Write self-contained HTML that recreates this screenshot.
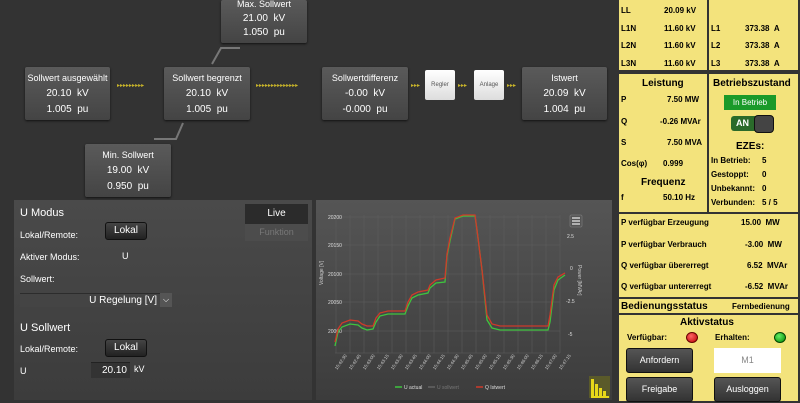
<!DOCTYPE html>
<html><head><meta charset="utf-8"><style>
*{margin:0;padding:0;box-sizing:border-box}
body{width:800px;height:400px;background:#333;font-family:"Liberation Sans",sans-serif;position:relative;overflow:hidden;color:#fff}
.box{position:absolute;background:linear-gradient(#5a5a5a,#444);border-radius:2px;box-shadow:0 1px 2px #111;text-align:center;font-size:10px;color:#fff;white-space:nowrap;line-height:12px}
.box .t{margin-top:5px;font-size:9px}
.box .v{margin-top:4px}
.arr{position:absolute;color:#c9b52a;font-size:6px}
.wb{position:absolute;background:linear-gradient(#fff,#ddd);border-radius:2px;color:#555;font-size:6px;text-align:center;line-height:30px;width:30px;height:30px;top:70px}
.ab{position:absolute;font-size:8px;color:#000;font-weight:bold;white-space:nowrap}
.y{position:absolute;background:#f3e37c;border:2px solid #333}
.btn{position:absolute;background:linear-gradient(#444,#222);border:1px solid #111;border-radius:3px;color:#fff;font-size:10px;text-align:center}
</style></head><body>
<!-- top diagram -->
<div class="box" style="left:221px;top:0;width:86px;height:43px"><div style="margin-top:-2px;font-size:9px">Max. Sollwert</div><div style="margin-top:3px">21.00&nbsp;&nbsp;kV</div><div style="margin-top:2px">1.050&nbsp;&nbsp;pu</div></div>
<svg style="position:absolute;left:0;top:0" width="620" height="200"><polyline points="240,48 221,48 212,64" fill="none" stroke="#777" stroke-width="2"/><polyline points="154,139 176,139 183,123" fill="none" stroke="#777" stroke-width="2"/></svg>
<div class="box" style="left:25px;top:67px;width:85px;height:53px"><div class="t">Sollwert ausgewählt</div><div class="v">20.10&nbsp;&nbsp;kV</div><div class="v">1.005&nbsp;&nbsp;pu</div></div>
<div class="arr" style="left:117px;top:82px">▸▸▸▸▸▸▸▸▸</div>
<div class="box" style="left:164px;top:67px;width:86px;height:53px"><div class="t">Sollwert begrenzt</div><div class="v">20.10&nbsp;&nbsp;kV</div><div class="v">1.005&nbsp;&nbsp;pu</div></div>
<div class="arr" style="left:256px;top:82px">▸▸▸▸▸▸▸▸▸▸▸▸▸▸</div>
<div class="box" style="left:322px;top:67px;width:86px;height:53px"><div class="t">Sollwertdifferenz</div><div class="v">-0.00&nbsp;&nbsp;kV</div><div class="v">-0.000&nbsp;&nbsp;pu</div></div>
<div class="arr" style="left:411px;top:82px">▸▸▸</div>
<div class="wb" style="left:425px">Regler</div>
<div class="arr" style="left:458px;top:82px">▸▸▸</div>
<div class="wb" style="left:474px">Anlage</div>
<div class="arr" style="left:507px;top:82px">▸▸▸</div>
<div class="box" style="left:522px;top:67px;width:85px;height:53px"><div class="t">Istwert</div><div class="v">20.09&nbsp;&nbsp;kV</div><div class="v">1.004&nbsp;&nbsp;pu</div></div>
<div class="box" style="left:85px;top:144px;width:86px;height:53px"><div class="t">Min. Sollwert</div><div class="v">19.00&nbsp;&nbsp;kV</div><div class="v">0.950&nbsp;&nbsp;pu</div></div>

<!-- U Modus panel -->
<div style="position:absolute;left:14px;top:200px;width:298px;height:200px;background:linear-gradient(#4a4a4a,#3c3c3c)"></div>
<div style="position:absolute;left:20px;top:207px;font-size:11px">U Modus</div>
<div style="position:absolute;left:20px;top:230px;font-size:9px">Lokal/Remote:</div>
<div class="btn" style="left:105px;top:222px;width:42px;height:18px;line-height:16px">Lokal</div>
<div style="position:absolute;left:20px;top:252px;font-size:9px">Aktiver Modus:</div>
<div style="position:absolute;left:122px;top:251px;font-size:9px">U</div>
<div style="position:absolute;left:20px;top:274px;font-size:9px">Sollwert:</div>
<div style="position:absolute;left:20px;top:293px;width:140px;height:14px;background:#444;border-top:1px solid #2c2c2c;font-size:10px;text-align:right;padding-right:3px;line-height:14px">U Regelung [V]</div>
<div style="position:absolute;left:160px;top:293px;width:12px;height:14px;background:#555;font-size:8px;text-align:center;line-height:14px">⌵</div>
<div style="position:absolute;left:20px;top:322px;font-size:11px">U Sollwert</div>
<div style="position:absolute;left:20px;top:344px;font-size:9px">Lokal/Remote:</div>
<div class="btn" style="left:105px;top:339px;width:42px;height:18px;line-height:16px">Lokal</div>
<div style="position:absolute;left:20px;top:366px;font-size:9px">U</div>
<div style="position:absolute;left:91px;top:362px;width:39px;height:16px;background:#333;border-top:1px solid #222;font-size:10px;text-align:right;padding-right:3px;line-height:16px">20.10</div>
<div style="position:absolute;left:134px;top:364px;font-size:9px">kV</div>
<div style="position:absolute;left:245px;top:204px;width:63px;height:20px;background:#2b2b2b;font-size:10px;text-align:center;line-height:20px">Live</div>
<div style="position:absolute;left:245px;top:224px;width:63px;height:17px;background:#4c4c4c;font-size:9px;color:#777;text-align:center;line-height:17px">Funktion</div>

<!-- chart -->
<div style="position:absolute;left:316px;top:200px;width:296px;height:200px;background:linear-gradient(#555,#3c3c3c)"></div>
<svg style="position:absolute;left:0;top:0" width="620" height="400" font-family="Liberation Sans">
<g stroke="#5e5e5e" stroke-width="0.5">
<line x1="335" y1="217" x2="560" y2="217"/><line x1="335" y1="245" x2="560" y2="245"/><line x1="335" y1="274" x2="560" y2="274"/><line x1="335" y1="302" x2="560" y2="302"/><line x1="335" y1="331" x2="560" y2="331"/><line x1="335" y1="353" x2="560" y2="353"/>
<line x1="336" y1="215" x2="336" y2="353"/><line x1="350" y1="215" x2="350" y2="353"/><line x1="364" y1="215" x2="364" y2="353"/><line x1="378" y1="215" x2="378" y2="353"/><line x1="392" y1="215" x2="392" y2="353"/><line x1="406" y1="215" x2="406" y2="353"/><line x1="420" y1="215" x2="420" y2="353"/><line x1="434" y1="215" x2="434" y2="353"/><line x1="448" y1="215" x2="448" y2="353"/><line x1="462" y1="215" x2="462" y2="353"/><line x1="476" y1="215" x2="476" y2="353"/><line x1="490" y1="215" x2="490" y2="353"/><line x1="504" y1="215" x2="504" y2="353"/><line x1="518" y1="215" x2="518" y2="353"/><line x1="532" y1="215" x2="532" y2="353"/><line x1="546" y1="215" x2="546" y2="353"/><line x1="560" y1="215" x2="560" y2="353"/>
</g>
<g font-size="5" fill="#ddd"><text x="328" y="219">20200</text><text x="328" y="247">20150</text><text x="328" y="276">20100</text><text x="328" y="304">20050</text><text x="328" y="333">20000</text>
<text x="567" y="238">2.5</text><text x="570" y="270">0</text><text x="566" y="303">-2.5</text><text x="568" y="336">-5</text></g>
<text transform="translate(323,285) rotate(-90)" font-size="5" fill="#ccc">Voltage [V]</text>
<text transform="translate(578,265) rotate(90)" font-size="5" fill="#ccc">Power [MVAr]</text>
<g font-size="4.5" fill="#ccc">
<text transform="translate(337,370) rotate(-55)">15:42:30</text><text transform="translate(351,370) rotate(-55)">15:42:45</text><text transform="translate(365,370) rotate(-55)">15:43:00</text><text transform="translate(379,370) rotate(-55)">15:43:15</text><text transform="translate(393,370) rotate(-55)">15:43:30</text><text transform="translate(407,370) rotate(-55)">15:43:45</text><text transform="translate(421,370) rotate(-55)">15:44:00</text><text transform="translate(435,370) rotate(-55)">15:44:15</text><text transform="translate(449,370) rotate(-55)">15:44:30</text><text transform="translate(463,370) rotate(-55)">15:45:45</text><text transform="translate(477,370) rotate(-55)">15:45:00</text><text transform="translate(491,370) rotate(-55)">15:45:15</text><text transform="translate(505,370) rotate(-55)">15:45:30</text><text transform="translate(519,370) rotate(-55)">15:46:00</text><text transform="translate(533,370) rotate(-55)">15:46:15</text><text transform="translate(547,370) rotate(-55)">15:47:00</text><text transform="translate(561,370) rotate(-55)">15:47:15</text>
</g>
<polyline fill="none" stroke="#3ec43e" stroke-width="1.3" points="335,346 338,332 342,327 350,324 358,325 362,328 367,330 373,329 376,322 380,316 388,314 405,314 408,306 412,298 418,295 428,293 430,288 436,283 445,282 447,256 450,241 455,219 463,216 475,216 477,230 482,270 487,320 492,328 500,330 548,330 550,322 554,290 558,280 565,275"/>
<polyline fill="none" stroke="#cf3a2a" stroke-width="1.3" points="335,342 338,329 342,323 350,320 358,321 362,324 367,326 373,326 376,318 380,313 388,311 405,311 408,302 412,295 418,292 428,290 430,285 436,280 445,278 447,254 450,238 455,218 463,215 475,215 477,230 482,270 487,315 492,324 500,326 548,326 550,315 554,285 558,277 565,273"/>
<rect x="570" y="215" width="12" height="12" rx="1" fill="#555" stroke="#888" stroke-width="0.5"/>
<g stroke="#eee" stroke-width="1.2"><line x1="572" y1="218" x2="580" y2="218"/><line x1="572" y1="221" x2="580" y2="221"/><line x1="572" y1="224" x2="580" y2="224"/></g>
<g font-size="5" fill="#ddd"><line x1="395" y1="387" x2="402" y2="387" stroke="#3ec43e" stroke-width="1.5"/><text x="404" y="389">U actual</text>
<line x1="428" y1="387" x2="435" y2="387" stroke="#777" stroke-width="1"/><text x="437" y="389" fill="#777">U sollwert</text>
<line x1="476" y1="387" x2="483" y2="387" stroke="#cf3a2a" stroke-width="1.5"/><text x="485" y="389">Q Istwert</text></g>
<rect x="589" y="376" width="21" height="22" fill="#5a5a2a"/>
<g fill="#e8d81a"><rect x="591" y="379" width="3" height="18"/><rect x="595" y="384" width="3" height="13"/><rect x="599" y="388" width="3" height="9"/><rect x="603" y="391" width="3" height="6"/><rect x="591" y="396" width="18" height="2"/></g>
</svg>

<!-- right panel -->
<div style="position:absolute;left:614px;top:0;width:186px;height:400px;background:#333"></div>
<div class="y" style="left:617px;top:-2px;width:92px;height:74px"></div>
<div class="y" style="left:707px;top:-2px;width:93px;height:74px"></div>
<div class="ab" style="left:621px;top:6px">LL</div><div class="ab" style="left:664px;top:6px">20.09 kV</div>
<div class="ab" style="left:621px;top:24px">L1N</div><div class="ab" style="left:664px;top:24px">11.60 kV</div>
<div class="ab" style="left:621px;top:41px">L2N</div><div class="ab" style="left:664px;top:41px">11.60 kV</div>
<div class="ab" style="left:621px;top:59px">L3N</div><div class="ab" style="left:664px;top:59px">11.60 kV</div>
<div class="ab" style="left:711px;top:24px">L1</div><div class="ab" style="left:745px;top:24px">373.38&nbsp;&nbsp;A</div>
<div class="ab" style="left:711px;top:41px">L2</div><div class="ab" style="left:745px;top:41px">373.38&nbsp;&nbsp;A</div>
<div class="ab" style="left:711px;top:59px">L3</div><div class="ab" style="left:745px;top:59px">373.38&nbsp;&nbsp;A</div>

<div class="y" style="left:617px;top:72px;width:92px;height:142px"></div>
<div class="y" style="left:707px;top:72px;width:93px;height:142px"></div>
<div class="ab" style="left:642px;top:78px;font-size:10px">Leistung</div>
<div class="ab" style="left:621px;top:95px">P</div><div class="ab" style="left:667px;top:95px">7.50 MW</div>
<div class="ab" style="left:621px;top:117px">Q</div><div class="ab" style="left:660px;top:117px">-0.26 MVAr</div>
<div class="ab" style="left:621px;top:138px">S</div><div class="ab" style="left:667px;top:138px">7.50 MVA</div>
<div class="ab" style="left:621px;top:159px">Cos(φ)</div><div class="ab" style="left:663px;top:159px">0.999</div>
<div class="ab" style="left:641px;top:177px;font-size:10px">Frequenz</div>
<div class="ab" style="left:621px;top:193px">f</div><div class="ab" style="left:663px;top:193px">50.10 Hz</div>
<div class="ab" style="left:713px;top:78px;font-size:10px">Betriebszustand</div>
<div style="position:absolute;left:724px;top:95px;width:52px;height:15px;background:#1a9a2a;color:#fff;font-size:8px;text-align:center;line-height:15px">In Betrieb</div>
<div style="position:absolute;left:731px;top:116px;width:43px;height:15px;background:#2a6a2a;border-radius:3px;color:#fff;font-size:9px;line-height:15px;padding-left:5px;font-weight:bold">AN</div>
<div style="position:absolute;left:754px;top:115px;width:20px;height:18px;background:#444;border:1px solid #111;border-radius:4px"></div>
<div class="ab" style="left:736px;top:141px;font-size:10px">EZEs:</div>
<div class="ab" style="left:711px;top:156px">In Betrieb:</div><div class="ab" style="left:762px;top:156px">5</div>
<div class="ab" style="left:711px;top:170px">Gestoppt:</div><div class="ab" style="left:762px;top:170px">0</div>
<div class="ab" style="left:711px;top:184px">Unbekannt:</div><div class="ab" style="left:762px;top:184px">0</div>
<div class="ab" style="left:711px;top:198px">Verbunden:</div><div class="ab" style="left:762px;top:198px">5 / 5</div>

<div class="y" style="left:617px;top:212px;width:183px;height:87px"></div>
<div class="ab" style="left:621px;top:218px">P verfügbar Erzeugung</div><div class="ab" style="left:741px;top:218px">15.00&nbsp;&nbsp;MW</div>
<div class="ab" style="left:621px;top:240px">P verfügbar Verbrauch</div><div class="ab" style="left:745px;top:240px">-3.00&nbsp;&nbsp;MW</div>
<div class="ab" style="left:621px;top:261px">Q verfügbar übererregt</div><div class="ab" style="left:747px;top:261px">6.52&nbsp;&nbsp;MVAr</div>
<div class="ab" style="left:621px;top:282px">Q verfügbar untererregt</div><div class="ab" style="left:745px;top:282px">-6.52&nbsp;&nbsp;MVAr</div>
<div class="y" style="left:617px;top:297px;width:183px;height:18px"></div>
<div class="ab" style="left:621px;top:301px;font-size:10px">Bedienungsstatus</div><div class="ab" style="left:732px;top:302px">Fernbedienung</div>
<div class="y" style="left:617px;top:313px;width:183px;height:90px"></div>
<div class="ab" style="left:680px;top:317px;font-size:10px">Aktivstatus</div>
<div class="ab" style="left:627px;top:333px">Verfügbar:</div>
<div style="position:absolute;left:686px;top:332px;width:12px;height:11px;border-radius:50%;background:radial-gradient(circle at 40% 35%,#f66,#b00);border:1px solid #600"></div>
<div class="ab" style="left:715px;top:333px">Erhalten:</div>
<div style="position:absolute;left:774px;top:332px;width:12px;height:11px;border-radius:50%;background:radial-gradient(circle at 40% 35%,#6e6,#080);border:1px solid #040"></div>
<div class="btn" style="left:626px;top:348px;width:67px;height:25px;line-height:23px;font-size:9px;background:linear-gradient(#555,#333)">Anfordern</div>
<div style="position:absolute;left:714px;top:348px;width:67px;height:25px;background:#fff;color:#888;font-size:9px;text-align:center;line-height:25px">M1</div>
<div class="btn" style="left:626px;top:377px;width:67px;height:25px;line-height:23px;font-size:9px;background:linear-gradient(#555,#333)">Freigabe</div>
<div class="btn" style="left:714px;top:377px;width:67px;height:25px;line-height:23px;font-size:9px;background:linear-gradient(#555,#333)">Ausloggen</div>
</body></html>
